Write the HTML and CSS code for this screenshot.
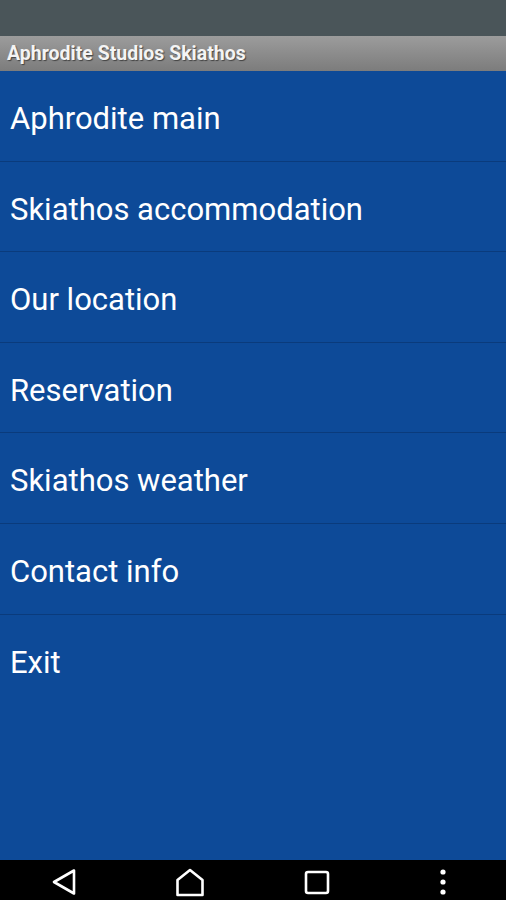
FILE: index.html
```html
<!DOCTYPE html>
<html lang="en">
<head>
    <meta charset="UTF-8">
    <meta name="viewport" content="width=device-width, initial-scale=1.0">
    <title>Aphrodite Studios Skiathos</title>
    <link rel="stylesheet" href="styles.css">
</head>
<body>
    <div class="status-bar"></div>
    <div class="title-bar">Aphrodite Studios Skiathos</div>

    <ul class="menu">
        <li class="menu-item">Aphrodite main</li>
        <li class="menu-item">Skiathos accommodation</li>
        <li class="menu-item">Our location</li>
        <li class="menu-item">Reservation</li>
        <li class="menu-item">Skiathos weather</li>
        <li class="menu-item">Contact info</li>
        <li class="menu-item last">Exit</li>
    </ul>

    <div class="nav-bar">
        <svg class="nav-icon back" width="26" height="28" viewBox="0 0 26 28">
            <path d="M23 2.5 L3 14 L23 25.5 Z" fill="none" stroke="#fff" stroke-width="2.6" stroke-linejoin="round"/>
        </svg>
        <svg class="nav-icon home" width="30" height="29" viewBox="0 0 30 29">
            <path d="M2.5 27 L2.5 12 L15 2 L27.5 12 L27.5 27 Z" fill="none" stroke="#fff" stroke-width="2.6" stroke-linejoin="round"/>
        </svg>
        <svg class="nav-icon recent" width="26" height="25" viewBox="0 0 26 25">
            <rect x="2" y="2" width="22" height="21" rx="2" fill="none" stroke="#fff" stroke-width="2.6"/>
        </svg>
        <svg class="nav-icon more" width="8" height="28" viewBox="0 0 8 28">
            <circle cx="4" cy="4" r="2.6" fill="#fff"/>
            <circle cx="4" cy="14" r="2.6" fill="#fff"/>
            <circle cx="4" cy="24" r="2.6" fill="#fff"/>
        </svg>
    </div>
</body>
</html>
```

FILE: styles.css
```css
body {
    margin: 0;
    height: 900px;
    display: flex;
    flex-direction: column;
    background-color: #0d4a98;
    font-family: Roboto, "Liberation Sans", sans-serif;
    color: #fff;
}
.status-bar {
    height: 36px;
    background-color: #4a5559;
}
.title-bar {
    height: 35px;
    line-height: 35px;
    padding-left: 7px;
    background: linear-gradient(to bottom, #9c9c9c, #7c7c7c);
    font-size: 19.5px;
    font-weight: bold;
    color: #f4f4f4;
    text-shadow: 1px 1px 1px rgba(0, 0, 0, 0.5);
}
.menu {
    list-style: none;
    margin: 0;
    padding: 0;
    flex: 1;
}
.menu-item {
    box-sizing: border-box;
    height: 90.6px;
    line-height: 85px;
    padding: 5px 0 0 10px;
    font-size: 31px;
    border-bottom: 1.5px solid #0a3b7c;
}
.menu-item.last {
    border-bottom: none;
}
.nav-bar {
    height: 40px;
    background-color: #000;
    display: flex;
    align-items: center;
    padding-top: 4px;
    box-sizing: border-box;
}
.nav-icon {
    display: block;
}
.back {
    margin-left: 51px;
}
.home {
    margin-left: 98px;
}
.recent {
    margin-left: 99px;
}
.more {
    margin-left: 109px;
}
```
